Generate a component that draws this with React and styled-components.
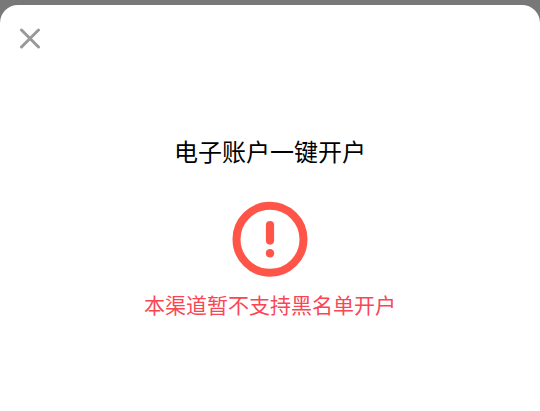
import React from "react";
import styled, { createGlobalStyle } from "styled-components";

const GlobalStyle = createGlobalStyle`
  * { box-sizing: border-box; }
  body {
    margin: 0;
    background: #797878;
    font-family: "Noto Sans CJK SC", sans-serif;
  }
`;

const Backdrop = styled.div`
  display: flex;
  flex-direction: column;
  min-height: 100vh;
  padding-top: 5px;
`;

const Sheet = styled.section`
  display: flex;
  flex-direction: column;
  flex: 1;
  background: #fff;
  border-radius: 18px 18px 0 0;
`;

const SheetHeader = styled.header`
  display: flex;
  padding: 20px 16px;
`;

const CloseButton = styled.button`
  display: grid;
  place-items: center;
  width: 28px;
  height: 28px;
  padding: 0;
  border: 0;
  background: none;
  color: #999;
  cursor: pointer;
`;

const Content = styled.main`
  display: flex;
  flex-direction: column;
  align-items: center;
  padding: 60px 16px 40px;
  text-align: center;
`;

const Title = styled.h1`
  margin: 0 0 32px;
  color: #000;
  font-size: 24px;
  font-weight: 400;
  line-height: 36px;
`;

const Message = styled.p`
  margin: 12px 0 0;
  color: #fa4654;
  font-size: 21px;
  font-weight: 400;
  line-height: 30px;
`;

function CloseIcon() {
  return (
    <svg width="22" height="22" viewBox="0 0 22 22" fill="none" aria-hidden="true">
      <path
        d="M2.5 2L19.5 19M19.5 2L2.5 19"
        stroke="currentColor"
        strokeWidth="3"
        strokeLinecap="round"
      />
    </svg>
  );
}

function AlertIcon() {
  return (
    <svg width="76" height="76" viewBox="0 0 76 76" fill="none" aria-hidden="true">
      <circle cx="38" cy="38.3" r="33.5" stroke="#ff5549" strokeWidth="8" />
      <path d="M38 24.2V39.6" stroke="#ff5549" strokeWidth="8.2" strokeLinecap="round" />
      <circle cx="38" cy="52.2" r="4.2" fill="#ff5549" />
    </svg>
  );
}

export default function App() {
  return (
    <Backdrop>
      <GlobalStyle />
      <Sheet role="dialog" aria-labelledby="sheet-title">
        <SheetHeader>
          <CloseButton type="button" aria-label="关闭">
            <CloseIcon />
          </CloseButton>
        </SheetHeader>
        <Content>
          <Title id="sheet-title">电子账户一键开户</Title>
          <AlertIcon />
          <Message role="alert">本渠道暂不支持黑名单开户</Message>
        </Content>
      </Sheet>
    </Backdrop>
  );
}
